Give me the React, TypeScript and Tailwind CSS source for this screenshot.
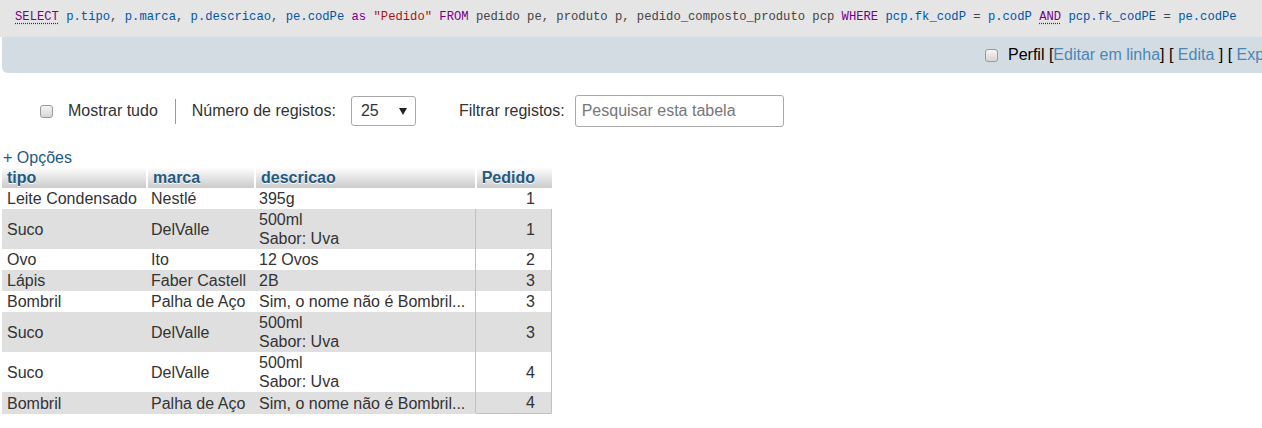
import React from "react";

const KW = "text-[#770088]";
const ID = "text-[#0055aa]";
const ST = "text-[#aa1111]";

function Checkbox() {
  return (
    <span className="inline-block w-[13px] h-[13px] rounded-[3px] border border-[#9a9a9a] bg-gradient-to-b from-[#f4f4f4] to-[#d6d6d6] shrink-0" />
  );
}

type Row = { tipo: string; marca: string; desc: string[]; ped: string };

const rows: Row[] = [
  { tipo: "Leite Condensado", marca: "Nestlé", desc: ["395g"], ped: "1" },
  { tipo: "Suco", marca: "DelValle", desc: ["500ml", "Sabor: Uva"], ped: "1" },
  { tipo: "Ovo", marca: "Ito", desc: ["12 Ovos"], ped: "2" },
  { tipo: "Lápis", marca: "Faber Castell", desc: ["2B"], ped: "3" },
  { tipo: "Bombril", marca: "Palha de Aço", desc: ["Sim, o nome não é Bombril..."], ped: "3" },
  { tipo: "Suco", marca: "DelValle", desc: ["500ml", "Sabor: Uva"], ped: "3" },
  { tipo: "Suco", marca: "DelValle", desc: ["500ml", "Sabor: Uva"], ped: "4" },
  { tipo: "Bombril", marca: "Palha de Aço", desc: ["Sim, o nome não é Bombril..."], ped: "4" },
];

export default function App() {
  return (
    <div className="w-[1262px] h-[428px] bg-white overflow-hidden font-['Liberation_Sans',Arial,sans-serif] text-[16px] text-[#333]">
      {/* SQL query */}
      <div className="h-[37px] bg-[#e5e5e5] flex items-center pl-[15px] pb-[3px] whitespace-nowrap font-['Liberation_Mono','DejaVu_Sans_Mono',monospace] text-[12.2px] text-[#444]">
        <span className={`${KW} underline decoration-dotted decoration-[#333] underline-offset-[3px]`}>SELECT</span>
        <span>&nbsp;</span>
        <span className={ID}>p.tipo</span>,&nbsp;<span className={ID}>p.marca</span>,&nbsp;
        <span className={ID}>p.descricao</span>,&nbsp;<span className={ID}>pe.codPe</span>&nbsp;
        <span className={KW}>as</span>&nbsp;<span className={ST}>"Pedido"</span>&nbsp;
        <span className={KW}>FROM</span>&nbsp;pedido pe, produto p, pedido_composto_produto pcp&nbsp;
        <span className={KW}>WHERE</span>&nbsp;<span className={ID}>pcp.fk_codP</span>&nbsp;=&nbsp;
        <span className={ID}>p.codP</span>&nbsp;
        <span className={`${KW} underline decoration-dotted decoration-[#333] underline-offset-[3px]`}>AND</span>&nbsp;
        <span className={ID}>pcp.fk_codPE</span>&nbsp;=&nbsp;<span className={ID}>pe.codPe</span>
      </div>

      {/* Tools bar */}
      <div className="ml-[2px] h-[36px] bg-[#d3dce3] rounded-bl-[6px] flex items-center whitespace-nowrap overflow-hidden pl-[983px] text-black">
        <Checkbox />
        <span className="ml-[10px]">Perfil</span>
        <span>&nbsp;[</span>
        <span className="text-[#4b86b4]">Editar em linha</span>
        <span>]&nbsp;[&nbsp;</span>
        <span className="text-[#4b86b4]">Edita</span>
        <span>&nbsp;]&nbsp;[&nbsp;</span>
        <span className="text-[#4b86b4]">Explicar SQL</span>
        <span>&nbsp;]</span>
      </div>

      {/* Controls */}
      <div className="mt-[22px] h-[32px] flex items-center pl-[40px] whitespace-nowrap">
        <Checkbox />
        <span className="ml-[15px]">Mostrar tudo</span>
        <span className="ml-[17px] mr-[16px] w-px h-[25px] bg-[#999]" />
        <span>Número de registos:</span>
        <div className="ml-[15px] w-[65px] h-[30px] border border-[#aaa] rounded-[3px] bg-white flex items-center justify-between pl-[9px] pr-[8px]">
          <span>25</span>
          <svg width="8" height="7" viewBox="0 0 8 7">
            <path d="M0 0 H8 L4 7 Z" fill="#222" />
          </svg>
        </div>
        <span className="ml-[43px]">Filtrar registos:</span>
        <input
          className="ml-[10px] w-[209px] h-[32px] border border-[#aaa] rounded-[3px] px-[6px] text-[16px] text-[#333] placeholder:text-[#777] outline-none"
          placeholder="Pesquisar esta tabela"
          readOnly
        />
      </div>

      {/* Opções */}
      <div className="mt-[21px] pl-[3px] leading-[19px] text-[#235a81]">+ Opções</div>

      {/* Table */}
      <table className="ml-[2px] border-separate border-spacing-0 table-fixed w-[550px] leading-[19px]">
        <colgroup>
          <col className="w-[144px]" />
          <col className="w-[108px]" />
          <col className="w-[221px]" />
          <col className="w-[77px]" />
        </colgroup>
        <thead>
          <tr className="bg-gradient-to-b from-white to-[#cbcbcb] text-[#235a81] font-bold [text-shadow:0_1px_0_#fff]">
            <th className="text-left py-px px-[5px] font-bold">tipo</th>
            <th className="text-left py-px px-[5px] font-bold border-l-2 border-white">marca</th>
            <th className="text-left py-px px-[5px] font-bold border-l-2 border-white">descricao</th>
            <th className="text-right py-px pr-[17px] font-bold border-l-2 border-white">Pedido</th>
          </tr>
        </thead>
        <tbody>
          {rows.map((r, i) => {
            const bg = i % 2 === 0 ? "bg-white" : "bg-[#dfdfdf]";
            const last = i === rows.length - 1;
            const pedBorder =
              i === 0
                ? "border-x border-transparent"
                : last
                ? "border-x border-b border-[#f6b473] rounded-b-[2px]"
                : "border-x border-[#f6b473]";
            return (
              <tr key={i} className={bg}>
                <td className="py-px px-[5px] align-middle whitespace-nowrap">{r.tipo}</td>
                <td className="py-px px-[5px] align-middle whitespace-nowrap">{r.marca}</td>
                <td className="py-px px-[5px] align-middle whitespace-nowrap">
                  {r.desc.map((d, j) => (
                    <div key={j}>{d}</div>
                  ))}
                </td>
                <td className={`py-px pr-[16px] text-right align-middle ${pedBorder}`}>{r.ped}</td>
              </tr>
            );
          })}
        </tbody>
      </table>
    </div>
  );
}
